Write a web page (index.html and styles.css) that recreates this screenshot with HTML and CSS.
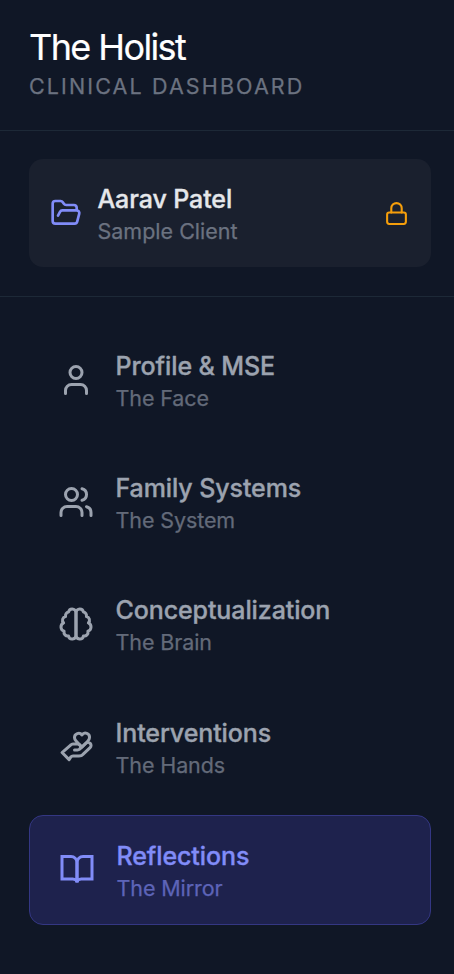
FILE: index.html
```html
<!DOCTYPE html>
<html lang="en">
<head>
<meta charset="utf-8">
<title>The Holist</title>
<link rel="stylesheet" href="styles.css">
</head>
<body>
<aside class="sidebar">
  <header class="brand">
    <h1 class="brand-name">The Holist</h1>
    <p class="brand-sub">Clinical Dashboard</p>
  </header>
  <section class="client">
    <div class="client-card">
      <svg class="icon icon-folder" viewBox="0 0 24 24"><path d="m6 14 1.5-2.9A2 2 0 0 1 9.24 10H20a2 2 0 0 1 1.94 2.5l-1.54 6a2 2 0 0 1-1.95 1.5H4a2 2 0 0 1-2-2V5a2 2 0 0 1 2-2h3.9a2 2 0 0 1 1.69.9l.81 1.2a2 2 0 0 0 1.67.9H18a2 2 0 0 1 2 2v2"/></svg>
      <div class="text">
        <p class="title">Aarav Patel</p>
        <p class="sub">Sample Client</p>
      </div>
      <svg class="icon icon-lock" viewBox="0 0 24 24"><rect x="3" y="11" width="18" height="11" rx="2"/><path d="M7 11V7a5 5 0 0 1 10 0v4"/></svg>
    </div>
  </section>
  <nav class="nav">
    <a class="item">
      <svg class="icon" viewBox="0 0 24 24"><path d="M19 21v-2a4 4 0 0 0-4-4H9a4 4 0 0 0-4 4v2"/><circle cx="12" cy="7" r="4"/></svg>
      <div class="text"><p class="title">Profile &amp; MSE</p><p class="sub">The Face</p></div>
    </a>
    <a class="item">
      <svg class="icon" viewBox="0 0 24 24"><path d="M16 21v-2a4 4 0 0 0-4-4H6a4 4 0 0 0-4 4v2"/><circle cx="9" cy="7" r="4"/><path d="M22 21v-2a4 4 0 0 0-3-3.87"/><path d="M16 3.13a4 4 0 0 1 0 7.75"/></svg>
      <div class="text"><p class="title">Family Systems</p><p class="sub">The System</p></div>
    </a>
    <a class="item">
      <svg class="icon" viewBox="0 0 24 24"><path d="M9.5 2A2.5 2.5 0 0 1 12 4.5v15a2.5 2.5 0 0 1-4.96.44 2.5 2.5 0 0 1-2.96-3.08 3 3 0 0 1-.34-5.58 2.5 2.5 0 0 1 1.32-4.24 2.5 2.5 0 0 1 1.98-3A2.5 2.5 0 0 1 9.5 2Z"/><path d="M14.5 2A2.5 2.5 0 0 0 12 4.5v15a2.5 2.5 0 0 0 4.96.44 2.5 2.5 0 0 0 2.96-3.08 3 3 0 0 0 .34-5.58 2.5 2.5 0 0 0-1.32-4.24 2.5 2.5 0 0 0-1.98-3A2.5 2.5 0 0 0 14.5 2Z"/></svg>
      <div class="text"><p class="title">Conceptualization</p><p class="sub">The Brain</p></div>
    </a>
    <a class="item">
      <svg class="icon" viewBox="0 0 24 24"><path d="M11 14h2a2 2 0 0 0 1.6-3.2C14.200 10.300 13.600 10 13 10h-3c-.6 0-1.100.2-1.400.6L2.700 15.700 7.400 20.400 8.600 18.600c.3-.4.8-.6 1.400-.6h4c1.100 0 2.100-.4 2.800-1.200l4.600-4.400a2 2 0 0 0-2.750-2.910l-4.200 3.900"/><path d="M19.500 8.500c.7-.7 1.500-1.600 1.500-2.700A2.730 2.730 0 0 0 16 4a2.780 2.780 0 0 0-5 1.800c0 1.200.8 2 1.500 2.800L16 12Z"/></svg>
      <div class="text"><p class="title">Interventions</p><p class="sub">The Hands</p></div>
    </a>
    <a class="item active">
      <svg class="icon icon-book" viewBox="0 0 24 24"><path d="M2 3h6a4 4 0 0 1 4 4v13.300a3 2.300 0 0 0-2.800-2.300H2z"/><path d="M22 3h-6a4 4 0 0 0-4 4v13.300a3 2.300 0 0 1 2.800-2.300H22z"/></svg>
      <div class="text"><p class="title">Reflections</p><p class="sub">The Mirror</p></div>
    </a>
  </nav>
</aside>
</body>
</html>
```

FILE: styles.css
```css
* { box-sizing: border-box; margin: 0; padding: 0; }
body {
  background: #101726;
  font-family: Inter, "Liberation Sans", sans-serif;
  color: #9ca3af;
}
.sidebar { min-height: 974px; }
.brand {
  height: 131px;
  padding: 27px 29px 0;
  border-bottom: 1px solid #1d2937;
}
.brand-name { font-size: 36px; line-height: 40px; font-weight: 400; letter-spacing: -1.6px; color: #fff; -webkit-text-stroke: 0.2px currentColor; }
.brand-sub { font-size: 21.5px; line-height: 28px; margin-top: 5px; letter-spacing: 2.12px; text-transform: uppercase; color: #6b7280; -webkit-text-stroke: 0.25px currentColor; }
.client { height: 166px; padding: 28px 23px 0 29px; border-bottom: 1px solid #1d2937; }
.client-card {
  display: flex; align-items: center; height: 108px; padding: 0 22px 0 21px;
  border-radius: 14px; background: #1a202e;
}
.text { flex: 1; }
.title { font-size: 25px; line-height: 36px; font-weight: 500; letter-spacing: -0.1px; -webkit-text-stroke: 0.35px currentColor; }
.sub { font-size: 21.5px; line-height: 28px; color: #6b7280; letter-spacing: -0.1px; -webkit-text-stroke: 0.25px currentColor; }
.icon { width: 36px; height: 36px; fill: none; stroke: currentColor; stroke-width: 2; stroke-linecap: round; stroke-linejoin: round; flex: none; }
.icon-folder { width: 32px; height: 32px; color: #818cf8; margin-right: 15.5px; }
.icon-lock { width: 25px; height: 25px; color: #f59e0b; }
.icon-book { stroke-linejoin: miter; stroke-miterlimit: 2; }
.client .title { color: #e5e7eb; }
.client .sub { letter-spacing: 0; }
.nav { display: flex; flex-direction: column; gap: 14.2px; padding: 29px 23px 0 29px; }
.item { display: flex; align-items: center; gap: 21.5px; height: 108px; padding: 0 29px; border-radius: 14px; }
.item .sub { color: #636a79; }
.active { height: 110px; border: 1px solid #343783; background: #1e224d; color: #818cf8; }
.active .sub { color: #5d64b8; }
```
